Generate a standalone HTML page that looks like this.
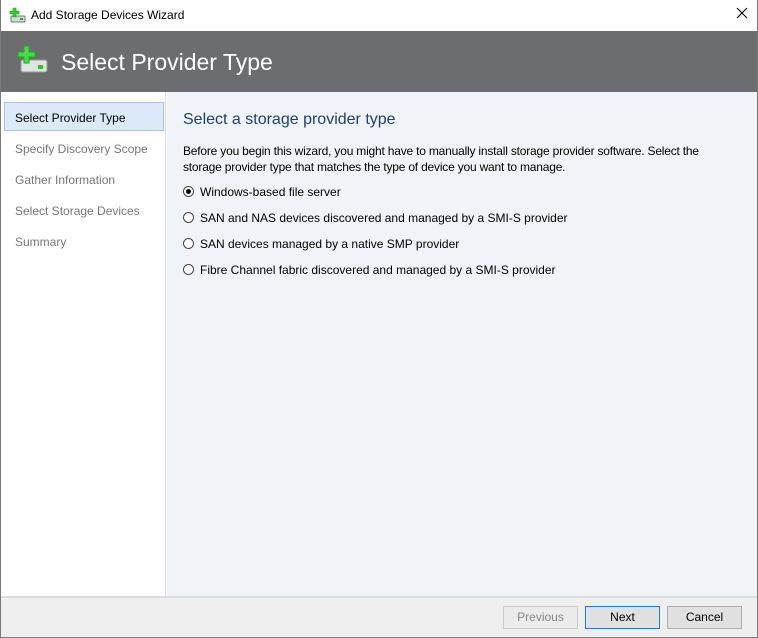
<!DOCTYPE html>
<html><head><meta charset="utf-8"><style>
*{margin:0;padding:0;box-sizing:border-box}
body{width:758px;height:638px;overflow:hidden;background:#fff;font-family:"Liberation Sans",sans-serif;font-size:12px;color:#000;position:relative}
.win{position:absolute;left:0;top:0;width:758px;height:638px;border:1px solid #7a7a7a;border-top:none}
.title{position:absolute;left:0;top:0;width:756px;height:31px;background:#fff}
.title span{position:absolute;left:30px;top:8px;font-size:12px}
.close{position:absolute;left:734px;top:6px;width:14px;height:14px}
.hdr{position:absolute;left:0;top:31px;width:756px;height:61px;background:#6b6d71}
.hdr span{position:absolute;left:60px;top:18px;color:#fff;font-size:23px}
.nav{position:absolute;left:0;top:92px;width:165px;height:505px;background:#fff;border-right:1px solid #dcdcdc}
.nav .t{position:absolute;left:14px;color:#777;font-size:12px}
.nav .sel{position:absolute;left:3px;top:10px;width:160px;height:29px;background:#dbe9f9;border:1px solid #a9c5e6}
.content{position:absolute;left:166px;top:92px;width:590px;height:505px;background:#f0f4f8}
h1{position:absolute;left:16px;top:19px;font-weight:normal;font-size:16px;color:#1e3f73}
.p{position:absolute;left:16px;top:51px;width:545px;line-height:16px;letter-spacing:-0.2px}
.r{position:absolute;left:16px;height:16px;line-height:16px}
.r i{display:inline-block;width:11px;height:11px;border:1px solid #444;border-radius:50%;vertical-align:-1px;margin-right:6px;position:relative;background:#fff}
.r i.on:after{content:"";position:absolute;left:2px;top:2px;width:5px;height:5px;border-radius:50%;background:#000}
.foot{position:absolute;left:0;top:596px;width:756px;height:41px;background:#efefef;border-top:2px solid #dcdcdc}
.btn{position:absolute;top:8px;width:75px;height:23px;border:1px solid #adadad;background:#e1e1e1;text-align:center;line-height:21px}
</style></head><body>
<div class="win">
<div class="title">
<svg style="position:absolute;left:8px;top:7px" width="18" height="17" viewBox="0 0 18 17"><rect x="2" y="9" width="14" height="6" rx="1" fill="#d8dcd8" stroke="#777"/><rect x="11" y="11" width="3" height="2" fill="#2a2"/><path d="M4 1h3v3h3v3H7v3H4V7H1V4h3z" fill="#3c3" stroke="#1a1" stroke-width=".6"/></svg>
<span>Add Storage Devices Wizard</span>
<svg class="close" viewBox="0 0 14 14"><path d="M2 2L12 12M12 2L2 12" stroke="#000" stroke-width="1.1"/></svg></div>
<div class="hdr">
<svg style="position:absolute;left:16px;top:14px" width="32" height="32" viewBox="0 0 32 32"><rect x="4" y="15" width="26" height="12" rx="2" fill="#e0e4e0" stroke="#999"/><rect x="21" y="20" width="5" height="4" fill="#2c2"/><path d="M7 1h5v6h6v5h-6v6H7v-6H1V7h6z" fill="#4d4" stroke="#2a2"/></svg>
<span>Select Provider Type</span></div>
<div class="nav">
<div class="sel"></div>
<div class="t" style="top:19px;color:#000">Select Provider Type</div>
<div class="t" style="top:50px">Specify Discovery Scope</div>
<div class="t" style="top:81px">Gather Information</div>
<div class="t" style="top:112px">Select Storage Devices</div>
<div class="t" style="top:143px">Summary</div>
</div>
<div class="content">
<h1>Select a storage provider type</h1>
<div class="p">Before you begin this wizard, you might have to manually install storage provider software. Select the storage provider type that matches the type of device you want to manage.</div>
<div class="r" style="top:92px"><i class="on"></i>Windows-based file server</div>
<div class="r" style="top:118px"><i></i>SAN and NAS devices discovered and managed by a SMI-S provider</div>
<div class="r" style="top:144px"><i></i>SAN devices managed by a native SMP provider</div>
<div class="r" style="top:170px"><i></i>Fibre Channel fabric discovered and managed by a SMI-S provider</div>
</div>
<div class="foot">
<div class="btn" style="left:502px;color:#888;background:#ececec;border-color:#ccc">Previous</div>
<div class="btn" style="left:584px;border-color:#1e7bd0">Next</div>
<div class="btn" style="left:666px">Cancel</div>
</div>
</div>
</body></html>
